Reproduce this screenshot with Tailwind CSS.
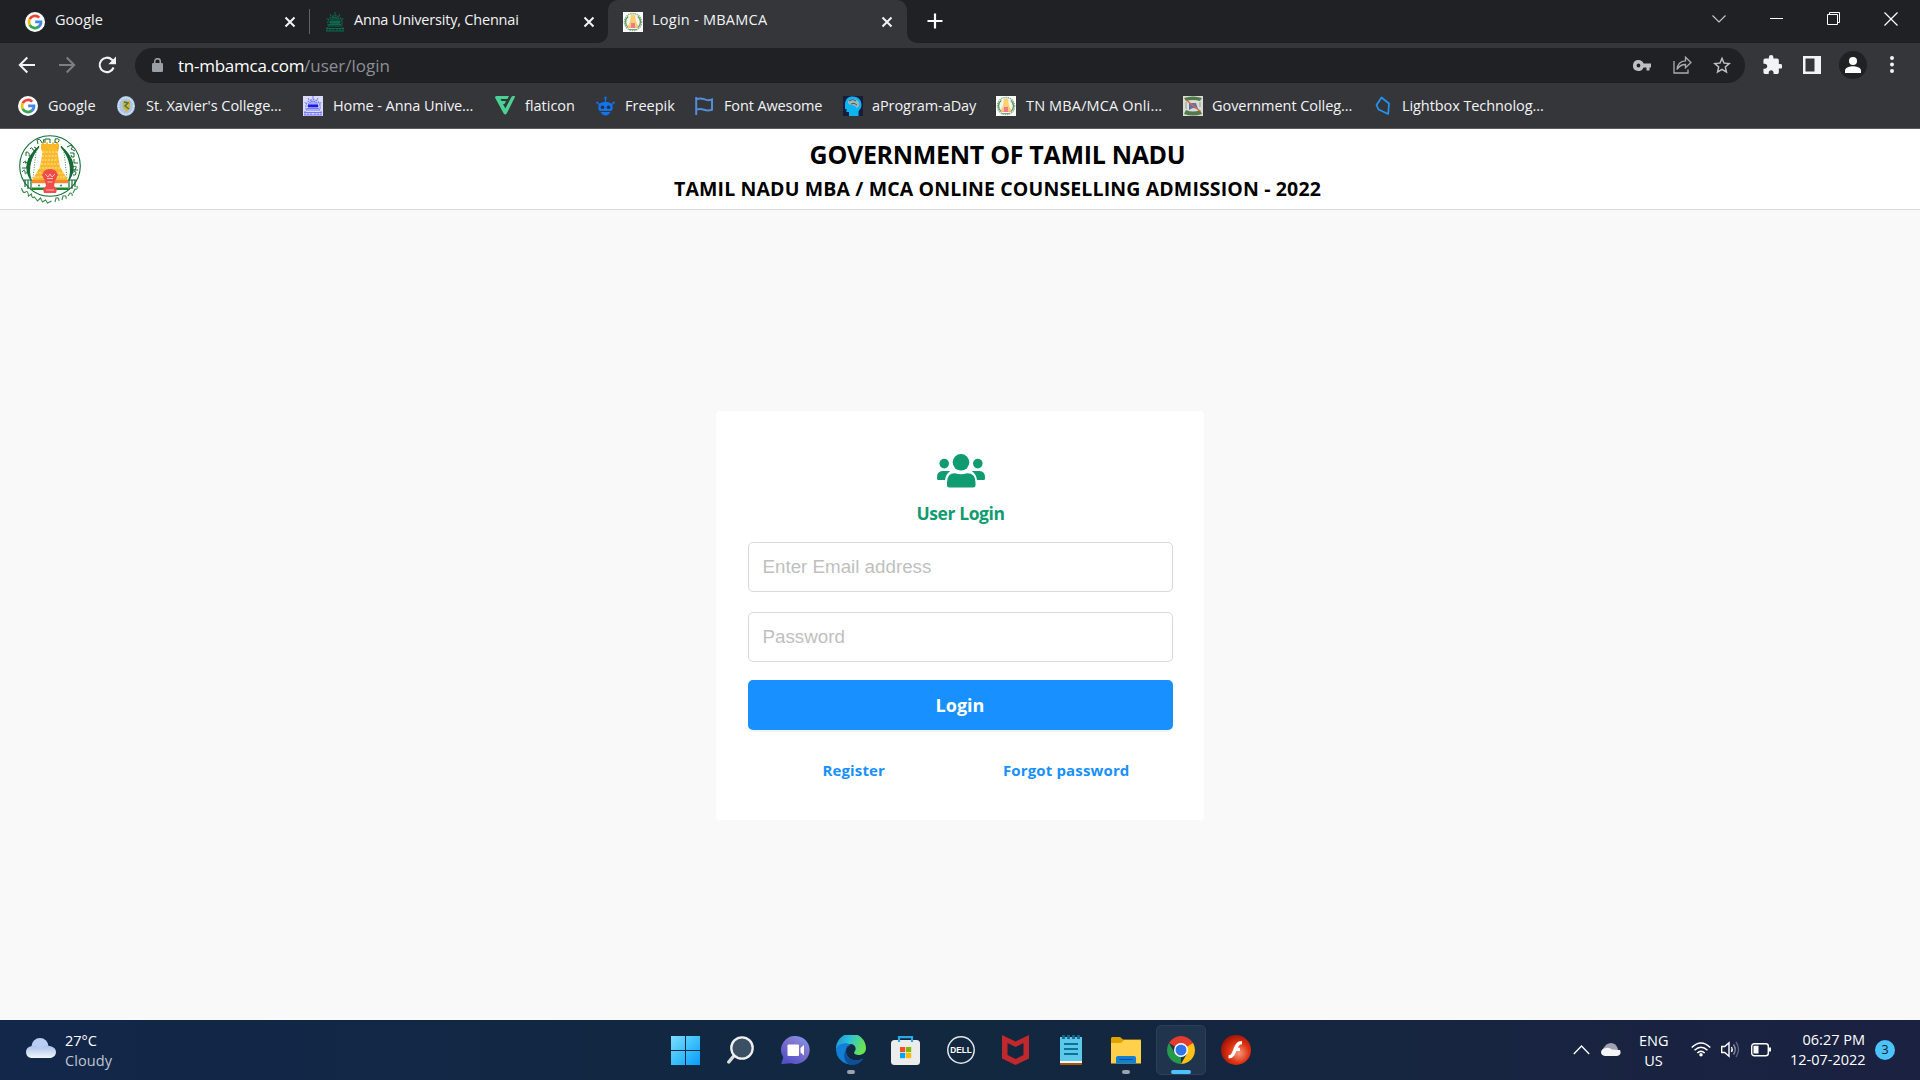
<!DOCTYPE html>
<html lang="en">
<head>
<meta charset="utf-8">
<title>Login - MBAMCA</title>
<script src="https://cdn.jsdelivr.net/npm/@tailwindcss/browser@4"></script>
</head>
<body class="h-[1080px] w-[1920px] overflow-hidden bg-[#f9f9f9] font-['Open_Sans','Noto_Sans',sans-serif]">
<svg class="hidden">
  <symbol id="google" viewBox="0 0 20 20"><circle cx="10" cy="10" r="10" fill="#fff"/><g fill="none" stroke-width="2.7"><path d="M14.2 5.6A6 6 0 0 0 4.7 7.2" stroke="#ea4335"/><path d="M4.7 7.2a6 6 0 0 0 0 5.6" stroke="#fbbc05"/><path d="M4.7 12.8a6 6 0 0 0 9.2 1.8" stroke="#34a853"/><path d="M13.5 14.9A5.6 5.6 0 0 0 16 9.9H10.2" stroke="#4285f4"/></g></symbol>
  <symbol id="tn" viewBox="0 0 20 20"><path d="M0 0h20v20H0z" fill="#fff"/><circle cx="10" cy="10" r="8.6" fill="#f3f6ef" stroke="#8fb291" stroke-width="1.5" stroke-dasharray="1.5 .7"/><path d="M5.200 4.500a7 7 0 0 0 0 11M14.800 4.500a7 7 0 0 1 0 11" fill="none" stroke="#5d9663" stroke-width="1.300"/><path d="M8 2.500h4l1 7 2.300 5H4.700l2.300-5z" fill="#fcd06e"/><path d="M5 14.500h10v1.500H5z" fill="#f5b56a"/><path d="M8 11h4v5H8z" fill="#f2788c"/><path d="M6 17h8v1H6z" fill="#6aa76c"/></symbol>
  <symbol id="x" viewBox="0 0 12 12"><path d="M1.500 1.500l9 9M10.500 1.500l-9 9" stroke="#f1f3f4" stroke-width="2" fill="none"/></symbol>
  <symbol id="au" viewBox="0 0 20 20"><path d="M1 19h18M1 16.500h18M3 14h14M4 12.500h12" stroke-width="1"/><path d="M3.500 14a7.200 7.200 0 1 1 13 0" fill="none" stroke-width="1.200" stroke-dasharray="2 .8"/><path d="M5.500 8a5 5 0 0 1 9 0M6.500 7h7M2 15v4M5 16v3M8 16v3M12 16v3M15 16v3M18 15v4M10 0v3M5 2l1 2M15 2l-1 2M1.500 6.500l2 1M18.500 6.500l-2 1" fill="none" stroke-width="1"/><path d="M5 9h10v2.200H5z"/></symbol>
</svg>

<!-- Tab strip -->
<div class="flex h-[43px] bg-[#202124] text-[14.5px] leading-[20px] text-[#f1f3f4]">
  <div class="flex w-[310px] items-center pl-[25px]">
    <svg class="size-5 shrink-0"><use href="#google"/></svg>
    <div class="ml-2.5 w-[229px] pb-[3px] tracking-[0.05px] whitespace-nowrap">Google</div>
    <svg class="size-3 shrink-0"><use href="#x"/></svg>
    <div class="ml-[13px] h-[25px] w-px bg-[#5f6368]"></div>
  </div>
  <div class="flex w-[298px] items-center pl-[15px]">
    <svg class="size-5 shrink-0" fill="#0b6b50" stroke="#0b6b50"><use href="#au"/></svg>
    <div class="ml-[9px] w-[229px] pb-[3px] tracking-[-0.2px] whitespace-nowrap">Anna University, Chennai</div>
    <svg class="size-3 shrink-0"><use href="#x"/></svg>
  </div>
  <div class="relative flex w-[299px] items-center rounded-t-[10px] bg-[#35363a] pl-[15px]">
    <svg class="absolute bottom-0 -left-[10px] size-[10px]" viewBox="0 0 10 10"><path d="M10 0v10H0A10 10 0 0 0 10 0" fill="#35363a"/></svg>
    <svg class="absolute -right-[10px] bottom-0 size-[10px]" viewBox="0 0 10 10"><path d="M0 0v10h10A10 10 0 0 1 0 0" fill="#35363a"/></svg>
    <svg class="size-5 shrink-0"><use href="#tn"/></svg>
    <div class="ml-[9px] w-[229px] pb-[3px] tracking-[0.25px] whitespace-nowrap">Login - MBAMCA</div>
    <svg class="size-3 shrink-0"><use href="#x"/></svg>
  </div>
  <svg class="mt-[13px] ml-5 size-4" viewBox="0 0 16 16"><path d="M8 .5v15M.5 8h15" stroke="#fff" stroke-width="2.200"/></svg>
  <div class="ml-auto flex items-center pr-[22px] pb-[7px]">
    <svg class="mt-px mr-[44px] h-[8px] w-[14px]" viewBox="0 0 14 8"><path d="M.5.5L7 7l6.500-6.500" stroke="#c8c9cb" stroke-width="1.100" fill="none"/></svg>
    <div class="mt-px mr-11 h-px w-[13px] bg-white"></div>
    <svg class="mt-px mr-[44px] size-[13px]" viewBox="0 0 13 13" fill="none" stroke="#fff"><path d="M.5 2.500h10v10H.5zM2.500 2.500v-2h10v10h-2"/></svg>
    <svg class="mt-px size-[14px]" viewBox="0 0 14 14"><path d="M.5.5l13 13M13.500.5l-13 13" stroke="#fff" stroke-width="1.200"/></svg>
  </div>
</div>

<!-- Toolbar -->
<div class="flex h-[43px] items-center bg-[#35363a] pl-[18px]">
  <svg class="size-[18px]" viewBox="0 0 18 18"><path d="M17 9H2M9.300 1.500L1.800 9l7.500 7.500" stroke="#f1f3f4" stroke-width="2" fill="none"/></svg>
  <svg class="ml-[22px] size-[18px]" viewBox="0 0 18 18"><path d="M1 9h15M8.700 1.500L16.200 9l-7.500 7.500" stroke="#7d7f83" stroke-width="2" fill="none"/></svg>
  <svg class="ml-[22px] size-[18px]" viewBox="0 0 18 18"><path d="M15.600 11.500A7.200 7.200 0 1 1 14 3.800l2 2" stroke="#f1f3f4" stroke-width="2.100" fill="none"/><path d="M18 .5v7.700h-7.700z" fill="#f1f3f4"/></svg>
  <div class="mt-px ml-[19px] flex h-[35px] w-[1610px] items-center rounded-full bg-[#202124] pr-[14px] pl-[17px]">
    <svg class="h-[14px] w-[11px]" viewBox="0 0 11 14"><rect y="5" width="11" height="9" rx="1.300" fill="#9aa0a6"/><path d="M2.700 6V3.500a2.800 2.800 0 0 1 5.600 0V6" stroke="#9aa0a6" stroke-width="1.500" fill="none"/></svg>
    <div class="mt-px ml-[15px] flex text-[17px] leading-[34px] whitespace-nowrap"><div class="w-[126px] tracking-[-0.25px] text-white">tn-mbamca.com</div><div class="text-[#8c8f94]">/user/login</div></div>
    <svg class="ml-auto h-[11px] w-[18px]" viewBox="0 0 18 11"><path fill="#bdc1c6" fill-rule="evenodd" d="M5.500 0a5.500 5.500 0 1 0 5.100 7.500h2.900V10.500h3V7.500H18v-4h-7.400A5.500 5.500 0 0 0 5.500 0m0 3.600a1.900 1.900 0 1 1 0 3.800 1.900 1.900 0 0 1 0-3.800"/></svg>
    <svg class="ml-[22px] h-[18px] w-[19px]" viewBox="0 0 19 18" fill="none" stroke="#a9acb0" stroke-width="1.300"><path d="M1 5v12h14v-3.500"/><path d="M4 13.500C4.500 8 7.500 5 12.500 4.800V1.200L18 6.500l-5.500 5.300V8.500C8.500 8.500 6 10 4 13.500z"/></svg>
    <svg class="ml-[21px] size-[18px]" viewBox="2 2 20 19" fill="#bdc1c6"><path d="M22 9.240l-7.190-.62L12 2 9.190 8.630 2 9.240l5.460 4.730L5.820 21 12 17.270 18.180 21l-1.630-7.030L22 9.240zM12 15.400l-3.760 2.270 1-4.280-3.320-2.880 4.380-.38L12 6.100l1.710 4.040 4.380.38-3.320 2.880 1 4.280L12 15.400z"/></svg>
  </div>
  <svg class="ml-[18px] size-[19px]" viewBox="1.500 1 21 21" fill="#f1f3f4"><path d="M20.500 11H19V7c0-1.100-.9-2-2-2h-4V3.500a2.500 2.500 0 0 0-5 0V5H4c-1.100 0-2 .9-2 2v3.800h1.500c1.490 0 2.700 1.210 2.700 2.700s-1.210 2.700-2.700 2.700H2V20c0 1.100.9 2 2 2h3.800v-1.500c0-1.490 1.210-2.700 2.700-2.700s2.700 1.210 2.700 2.700V22H17c1.100 0 2-.9 2-2v-4h1.500a2.500 2.500 0 0 0 0-5z"/></svg>
  <svg class="ml-[21px] size-[18px]" viewBox="0 0 18 18"><path fill="#f1f3f4" fill-rule="evenodd" d="M0 0h18v18H0zM2.500 2.500v13h9v-13z"/></svg>
  <svg class="ml-[18px] size-7" viewBox="0 0 28 28"><circle cx="14" cy="14" r="14" fill="#202124"/><circle cx="14" cy="10" r="4" fill="#fff"/><path d="M6 22v-2.500c0-3 5.300-4.300 8-4.300s8 1.300 8 4.300V22z" fill="#fff"/></svg>
  <svg class="ml-[23px] h-[17px] w-1" viewBox="0 0 4 17" fill="#f1f3f4"><circle cx="2" cy="2" r="2"/><circle cx="2" cy="8.500" r="2"/><circle cx="2" cy="15" r="2"/></svg>
</div>

<!-- Bookmarks bar -->
<div class="flex h-[43px] items-center border-b border-[#5b5c60] bg-[#35363a] pb-[3px] pl-[18px] text-[14.5px] whitespace-nowrap text-[#f1f3f4]">
  <svg class="size-5"><use href="#google"/></svg>
  <div class="ml-2.5 w-[69px]">Google</div>
  <svg class="h-5 w-[18px]" viewBox="0 0 18 20"><ellipse cx="9" cy="10" rx="9" ry="10" fill="#a9c4e4"/><ellipse cx="9" cy="10" rx="7.500" ry="8.300" fill="none" stroke="#e4eefa" stroke-width="1.500" stroke-dasharray="1 .8"/><path d="M6 5h7v7l-3.500 4L6 12z" fill="#d3b33a"/><path d="M7 6l4 1-3 3 4 3" stroke="#497a43" stroke-width="1.500" fill="none"/></svg>
  <div class="ml-[11px] w-[157px] tracking-[-0.05px]">St. Xavier's College...</div>
  <svg class="size-5 bg-[#dadcff]" fill="#7a7cf3" stroke="#7779f5"><use href="#au"/><path d="M5 8.500h10v2.500H5z" fill="#1a1ae0" stroke="none"/></svg>
  <div class="ml-2.5 w-[162px] tracking-[-0.08px]">Home - Anna Unive...</div>
  <svg class="h-[19px] w-5" viewBox="0 0 20 19"><path d="M0 1.500Q0 0 1.500 0H14l-1.600 3H5.500l1 2H11l-1.500 3H8l2.300 4.500L16.500.8Q17 0 18 0h2l-.3 1.500L11.700 17.500q-1.400 2-3 0z" fill="#4ad295"/></svg>
  <div class="ml-2.5 w-[71px]">flaticon</div>
  <svg class="h-5 w-[19px]" viewBox="0 0 19 20"><path d="M9.500 1.500V6M1 6l2.500 3M18 6l-2.500 3M0 7l2-1M19 7l-2-1" stroke="#1273eb" stroke-width="1.200"/><circle cx="9.500" cy="1.700" r="1.200" fill="#1273eb"/><path d="M3.500 7.500Q9.500 4 15.500 7.500q2.500 4 0 7.500h-12q-2.500-3.500 0-7.500M4.500 16h10q-2 3.500-5 3.500t-5-3.500" fill="#1273eb"/><circle cx="6.500" cy="11.300" r="1.800" fill="#252f47"/><circle cx="12.500" cy="11.300" r="1.800" fill="#252f47"/></svg>
  <div class="ml-2.5 w-[70px]">Freepik</div>
  <svg class="h-[18px] w-[18px]" viewBox="0 0 18 18"><path d="M1.200 0v18M1.200 2.500q3.800-2 7.800-.3t8 .3v10.300q-4 1.500-8 0t-7.800 0" stroke="#538dd7" stroke-width="2" fill="none"/></svg>
  <div class="ml-[11px] w-[119px] tracking-[-0.12px]">Font Awesome</div>
  <svg class="size-5" viewBox="0 0 20 20"><path d="M0 0h20v20H0z" fill="#171c3c"/><path d="M2 9C2 3 5 .5 10 .5S18.500 4 18.500 9c0 4-3 5-3 7v4H6v-4H3.500v-3H2z" fill="#0cb5f2"/><path d="M5 5q5-4 10 0 3 4-1 7-2-3-5-3T5 7z" fill="#9fb6b4"/><path d="M6 5q4-3 7 0M8 8q3-2 6 1" stroke="#375d67" fill="none"/></svg>
  <div class="ml-[9px] w-[124px] tracking-[-0.08px]">aProgram-aDay</div>
  <svg class="size-5"><use href="#tn"/></svg>
  <div class="ml-2.5 w-[157px] tracking-[0.15px]">TN MBA/MCA Onli...</div>
  <svg class="size-5" viewBox="0 0 20 20"><path d="M0 0h20v20H0z" fill="#d9ddd4"/><path d="M1 2q9-3 18 0l-2 3q-7-2-14 0zM3 14q7 3 14 0l2 4q-9 3-18 0z" fill="#517a4b"/><path d="M6 7h7l2 6-5-1-4 2z" fill="#6a6ea2"/><path d="M3 4l14 11" stroke="#d66a4c" stroke-width="1.500"/><path d="M3 6v7M17 6v5" stroke="#a5b79f" stroke-width="1.500"/></svg>
  <div class="ml-[9px] w-[163px] tracking-[-0.06px]">Government Colleg...</div>
  <svg class="h-5 w-4" viewBox="0 0 16 20"><path d="M6.500 1.500l7.500 6-.8 10.500L3.500 13.500 1.500 9z" fill="none" stroke="#2196f3" stroke-width="1.700" stroke-linejoin="round"/></svg>
  <div class="ml-[11px] tracking-[-0.08px]">Lightbox Technolog...</div>
</div>

<!-- Site header -->
<header class="flex h-[81px] items-start border-b border-[#dadada] bg-white pl-[19px]">
  <svg class="mt-[6px] h-[69px] w-[62px]" viewBox="0 0 62 69" fill="none">
    <circle cx="31" cy="31" r="30.300" stroke="#146b35" stroke-width="1.100"/>
    <path d="M20 11.500Q1 28 12 45 6.500 28 20 11.500M42 11.500Q61 28 50 45 55.500 28 42 11.500" fill="#146b35" stroke="#146b35" stroke-width="1.300"/>
    <path d="M17 17l-3 26M45 17l3 26" stroke="#146b35" stroke-width=".8" stroke-dasharray="1 1.500"/>
    <g stroke="#17692f" stroke-width="1">
      <path d="M3 37q3-4 3 0t3-1M3 33h5v-2M4 28q4-4 2 0l4-1V23M7 21v-4q4 0 3 4h3M11 14q2-3 3 1l3 1q1-4-2-4M19 9l-1-4q3-2 4 1t2 2l1-4M26 8V4h5v4M36 8V4q5-1 4 2t-4 1M48 12l4-2q3 2 0 4l4 2M51 18h4v4q-3 1-3-2M55 24v4h4M54 32q4-2 3 1t-3 2h5M53 38q4-3 4 0t-3 2"/>
    </g>
    <path d="M22 9h18v5l-1.500 3 2.500 15 8 13H13l8-13 2.500-15L22 14z" fill="#fbb829"/>
    <path d="M23.500 17h15M23 21h16M22.500 25h17M22 29h18M20 33h22M17 38h28M15 42h32" stroke="#fff0c5" stroke-width=".9" stroke-dasharray="2 1.200"/>
    <path d="M24 10v-2.500M28 10V7.500M34 10V7.500M38 10V7.500" stroke="#fbb829" stroke-width="2"/>
    <path d="M13 45h36v3.500H13z" fill="#f58a2c"/><path d="M13 48.500h36v4H13z" fill="#fff"/><path d="M13 52.500h36V55H13z" fill="#178a26"/>
    <circle cx="20" cy="50.500" r="1" fill="#5161a9"/><circle cx="42" cy="50.500" r="1" fill="#5161a9"/>
    <path d="M5 45h8M49 45h8M6 45v7M9 45v9M12 45v10M50 45v10M53 45v9M56 45v7" stroke="#146b35" stroke-width="1.200"/>
    <path d="M25 36q6-4 12 0l2 4-3 6-1 5 3 3-1 4H25l-1-4 3-3-1-5-3-6z" fill="#f34a4a"/>
    <path d="M26 39l3 3 2-3 2 3 3-3M28 43.500h6M28.500 47h5M27 55h8" stroke="#ffc2bd"/>
    <path d="M2.500 53q1.500 6 4 4t3 4l3-2q0 5 3 3l3 4 3-3 2 4 3-2 2 3 4-2M36 67l1-4q3-1 3 3M43 65l1-4q4-1 3 3M49 61l2-3q3 0 2 3M54 58l2-4q3 1 2-3" stroke="#3d8a4d" stroke-width="1.100"/>
  </svg>
  <div class="flex flex-1 flex-col items-center pr-[6px] font-bold whitespace-nowrap text-black">
    <h1 class="mt-[8px] text-[25px] leading-[34px] tracking-[-0.31px]">GOVERNMENT OF TAMIL NADU</h1>
    <h2 class="mt-[4px] text-[19.500px] leading-[28px] tracking-[0.14px]">TAMIL NADU MBA / MCA ONLINE COUNSELLING ADMISSION - 2022</h2>
  </div>
</header>

<!-- Login area -->
<main class="flex h-[810px] justify-center pt-[201px]">
  <form class="flex h-[409px] w-[488px] flex-col items-center rounded-[4px] bg-white px-8 pt-[43px] font-bold whitespace-nowrap">
    <svg class="ml-px h-[34px] w-12" viewBox="0 0 48 34" fill="#109b70"><circle cx="24" cy="8.300" r="8.300"/><circle cx="7.200" cy="9.600" r="4.800"/><circle cx="40.800" cy="9.600" r="4.800"/><path d="M12 17H5.500Q0 17.500 0 23v1.500Q0 26 1.500 26H8q1-6.500 5-8.500Q12.700 17 12 17M36 17h6.500q5.500.5 5.500 6v1.500q0 1.500-1.500 1.500H40q-1-6.500-5-8.500.3-.5 1-.5M18 19.200q6 2.200 12 0 8.500 0 8.500 9V31q0 2.500-2.500 2.500H12.500Q10 33.500 10 31v-2.800q0-9 8-9"/></svg>
    <div class="mt-[12px] mb-px ml-px text-[17.500px] leading-[26px] tracking-[-0.4px] text-[#109b70]">User Login</div>
    <input type="text" placeholder="Enter Email address" class="mt-[15px] h-[50px] w-[425px] shrink-0 rounded-[5px] border border-[#d9d9d9] px-[14px] font-['Liberation_Sans',sans-serif] text-[18.750px] font-normal placeholder:text-[#bfbfbf]">
    <input type="password" placeholder="Password" class="mt-5 h-[50px] w-[425px] shrink-0 rounded-[5px] border border-[#d9d9d9] px-[14px] font-['Liberation_Sans',sans-serif] text-[18.750px] font-normal placeholder:text-[#bfbfbf]">
    <button type="button" class="mt-[18px] h-[50px] w-[425px] shrink-0 rounded-[5px] bg-[#1890ff] text-[18px] font-bold text-white shadow-[0_2px_0_rgba(0,0,0,0.045)]">Login</button>
    <div class="mt-[28px] grid w-[425px] grid-cols-2 text-center text-[15px] leading-[24px] tracking-[0.14px] text-[#1890ff]"><a>Register</a><a>Forgot password</a></div>
  </form>
</main>

<!-- Taskbar -->
<footer class="flex h-[60px] bg-linear-to-r from-[#12274a] via-[#11283f] to-[#1b2141] text-[14.500px] leading-5 whitespace-nowrap text-white">
  <div class="flex w-[658px] pl-[26px]">
    <svg class="mt-[18px] h-5 w-[30px]" viewBox="0 0 30 20"><defs><linearGradient id="cl" x2="0" y2="1"><stop stop-color="#a7c0ee"/><stop offset="1" stop-color="#f1f5fb"/></linearGradient></defs><circle cx="14" cy="8.500" r="8.500" fill="#b9cdf5"/><path d="M6 8q5-1 8 3 4-5 10-3 6 1.500 6 6t-5 6H5q-5-1-5-6t6-6" fill="url(#cl)"/></svg>
    <div class="mt-[11px] ml-[9px]"><div>27°C</div><div class="tracking-[0.1px] text-[#c0c5d0]">Cloudy</div></div>
  </div>
  <div class="flex">
    <div class="flex w-[55px] justify-center pt-4"><svg class="size-[29px]" viewBox="0 0 29 29"><defs><linearGradient id="wn" x2="1" y2="1"><stop stop-color="#7fdcff"/><stop offset=".5" stop-color="#3cc0fb"/><stop offset="1" stop-color="#0a9bfb"/></linearGradient></defs><path d="M0 0h14v14H0zM15 0h14v14H15zM0 15h14v14H0zM15 15h14v14H15z" fill="url(#wn)"/></svg></div>
    <div class="flex w-[55px] justify-center pt-4"><svg class="h-[29px] w-[27px]" viewBox="0 0 27 29"><path d="M8 18.500L1.800 26" stroke="#ddd" stroke-width="3.400" stroke-linecap="round"/><circle cx="15" cy="12" r="10.700" fill="#3c5063" stroke="#f0f0f0" stroke-width="2.300"/></svg></div>
    <div class="flex w-[55px] justify-center pt-4"><svg class="h-[29px] w-[29px]" viewBox="0 0 29 29"><defs><linearGradient id="ch" x1="1" y1="0" x2=".3" y2="1"><stop stop-color="#7b9ef5"/><stop offset=".4" stop-color="#8277cf"/><stop offset="1" stop-color="#5450c8"/></linearGradient></defs><path d="M15 0a14 14 0 1 1-5 27.200L1 28q-1 0-.5-1l1.800-5.500A14 14 0 0 1 15 0" fill="url(#ch)"/><rect x="6.500" y="8.500" width="11.500" height="11.500" rx="1" fill="#fff"/><path d="M19.500 12l3.500-3v10.500l-3.500-3z" fill="#fff"/></svg></div>
    <div class="flex w-[55px] flex-col items-center pt-[15px]"><svg class="size-[30px]" viewBox="0 0 30 30"><defs><linearGradient id="e1" x2="1" y2=".3"><stop stop-color="#1b8ed4"/><stop offset=".5" stop-color="#2ec2d8"/><stop offset="1" stop-color="#6ae253"/></linearGradient></defs><path d="M0 14A15 15 0 0 1 30 13c0 5-4 7-7 7-5 0-6-2-4-4 2-4-1-7-5-7C7 9 2 12 0 14" fill="url(#e1)"/><path d="M0 14C2 9 10 6.500 15 10q-5 0-5 6c0 8 9 12 17 7.500A15 15 0 0 1 0 15z" fill="#117fd6"/><path d="M15 10.500q-5 .5-5 6c0 8 9 11 17.500 7q-4.500 7-12.500 6.500C6 28 6 14 15 10.500" fill="#0f4e99"/></svg><div class="mt-[5px] h-1 w-2 rounded-full bg-[#9aa3ae]"></div></div>
    <div class="flex w-[55px] justify-center pt-4"><svg class="size-[29px]" viewBox="0 0 29 29"><rect y="4" width="29" height="25" rx="3.500" fill="#ececec"/><path d="M8 6V1.200h13V6" fill="none" stroke="#2ba9e6" stroke-width="2.200"/><path d="M9 11h5.200v5.200H9z" fill="#f25022"/><path d="M15 11h5.200v5.200H15z" fill="#7fba00"/><path d="M9 17h5.200v5.200H9z" fill="#00a4ef"/><path d="M15 17h5.200v5.200H15z" fill="#ffb900"/></svg></div>
    <div class="flex w-[55px] justify-center pt-4"><svg class="size-[29px]" viewBox="0 0 29 29"><circle cx="15" cy="14" r="13.200" fill="none" stroke="#e3e7eb" stroke-width="1.500"/><text x="15" y="17.300" text-anchor="middle" textLength="21.500" lengthAdjust="spacingAndGlyphs" font-family="Liberation Sans" font-weight="700" font-size="9.500" fill="#fff">DELL</text></svg></div>
    <div class="flex w-[55px] justify-center pt-[15px]"><svg class="h-[30px] w-[27px]" viewBox="0 0 27 30"><path fill="#c1282d" fill-rule="evenodd" d="M0 0l13.500 6.500L27 0v23.500L13.500 30 0 23.500zM5.500 8v12l8 4 8-4V8l-8 4z"/></svg></div>
    <div class="flex w-[55px] justify-center pt-[15px]"><svg class="h-[30px] w-[22px]" viewBox="0 0 22 30"><path d="M0 2h22v25H0z" fill="#5cc8ea"/><path d="M0 26h22v2H0z" fill="#f3f3f3"/><path d="M0 28h22v2H0z" fill="#a8540e"/><path d="M3.500 0v4M8.500 0v4M13.500 0v4M18.500 0v4" stroke="#126a8d" stroke-width="2.800"/><path d="M4 9h14M4 14h14M4 19h14" stroke="#117097" stroke-width="1.800"/></svg></div>
    <div class="flex w-[55px] flex-col items-center pt-[17px]"><svg class="h-[27px] w-[30px]" viewBox="0 0 30 27"><path d="M0 1.500Q0 0 1.500 0H9l3 2.500H30V10H0z" fill="#e2a203"/><path d="M0 6h10l3-3h15.500Q30 3 30 4.500V26.500H0z" fill="#ffd049"/><path d="M5 26.500V21q0-2 2-2h16q2 0 2 2v5.500z" fill="#1180d4"/><path d="M8.500 22.500h13" stroke="#0a4f96"/></svg><div class="mt-1.5 h-1 w-2 rounded-full bg-[#9aa3ae]"></div></div>
    <div class="flex w-[55px] justify-center pt-[5px]"><div class="flex h-[50px] w-[50px] flex-col items-center rounded-[5px] border border-[#2d3f59] bg-[#21344e] pt-2.5">
      <svg class="size-7 shrink-0" viewBox="0 0 28 28"><path d="M14 14L1.880 7A14 14 0 0 1 26.120 7z" fill="#e33b2e"/><path d="M14 14L14 28A14 14 0 0 1 1.880 7L8 17.500z" fill="#259a4a"/><path d="M14 7H26.120A14 14 0 0 1 14 28L20 17.500z" fill="#fbc116"/><path d="M14 14V7H26.120z" fill="#e33b2e"/><circle cx="14" cy="14" r="7" fill="#fff"/><circle cx="14" cy="14" r="5.500" fill="#2f74e8"/></svg>
      <div class="mt-[6px] h-1 w-5 shrink-0 rounded-full bg-[#4cc2ff]"></div></div></div>
    <div class="flex w-[55px] justify-center pt-[15px]"><svg class="size-[30px]" viewBox="0 0 30 30"><defs><radialGradient id="fl" cx=".6" cy=".6" r=".6"><stop stop-color="#f79a80"/><stop offset=".55" stop-color="#e03414"/><stop offset="1" stop-color="#a81505"/></radialGradient></defs><circle cx="15" cy="15" r="15" fill="url(#fl)"/><path d="M7.500 23.500v-3.200c3-.3 3.800-3 5-6.300C14.200 9.500 16 6 21 6v3.300c-2.400.2-3.300 1.600-4.100 3.400H19V16h-3.500c-1.500 4-3.500 7.500-8 7.500" fill="#fff"/></svg></div>
  </div>
  <div class="ml-auto flex pr-[25px]">
    <svg class="mt-[25px] h-[10px] w-[17px]" viewBox="0 0 17 10"><path d="M.8 9l7.700-8 7.700 8" stroke="#fff" stroke-width="1.300" fill="none"/></svg>
    <svg class="mt-[23px] ml-[11px] h-[13px] w-[20px]" viewBox="0 0 20 13"><path d="M2 6Q5 0 10 0t7 6l-2 3H3z" fill="#9ea2b1"/><path d="M5 5q3-1 6 1.500L19 7q2 5-3 6H4q-4-.5-4-4 .5-3.500 5-4" fill="#f5f5f8"/></svg>
    <div class="mt-[11px] ml-[18px] w-[29px] text-center"><div>ENG</div><div>US</div></div>
    <svg class="mt-[22px] ml-[23px] h-[15px] w-5" viewBox="0 0 20 15" fill="none" stroke="#fff" stroke-width="1.500"><path d="M.7 5.500Q10-3.500 19.300 5.500M3.500 8.200q6.500-6 13 0M6.300 11q3.700-3.500 7.400 0"/><circle cx="10" cy="12.800" r="1.700" fill="#fff" stroke="none"/></svg>
    <svg class="mt-[21px] ml-[10px] h-[17px] w-5" viewBox="0 0 20 17" fill="none" stroke="#fff" stroke-width="1.400"><path d="M.7 5.500h3L8 1.700v13.600L3.700 11.500h-3z"/><path d="M10.500 6q1.500 2.500 0 5"/><path d="M12.500 3.500q3.500 5 0 10" stroke="#8c90a5"/><path d="M15 1q5 7.500 0 15" stroke="#5d6280"/></svg>
    <svg class="mt-[22px] ml-[10px] h-[15px] w-[20px]" viewBox="0 0 20 15"><rect x=".7" y="1.700" width="16.600" height="12" rx="2.500" fill="none" stroke="#fff" stroke-width="1.400"/><path d="M2.500 3.800h5v7.800h-5zM18 5.500h2v4h-2z" fill="#fff"/></svg>
    <div class="mt-[10px] ml-[19px] w-[75px] text-right"><div>06:27 PM</div><div>12-07-2022</div></div>
    <div class="mt-5 ml-[10px] flex size-5 items-center justify-center rounded-full bg-[#4cc2ff] text-[12.500px] text-[#0b1c2c]">3</div>
  </div>
</footer>
</body>
</html>
